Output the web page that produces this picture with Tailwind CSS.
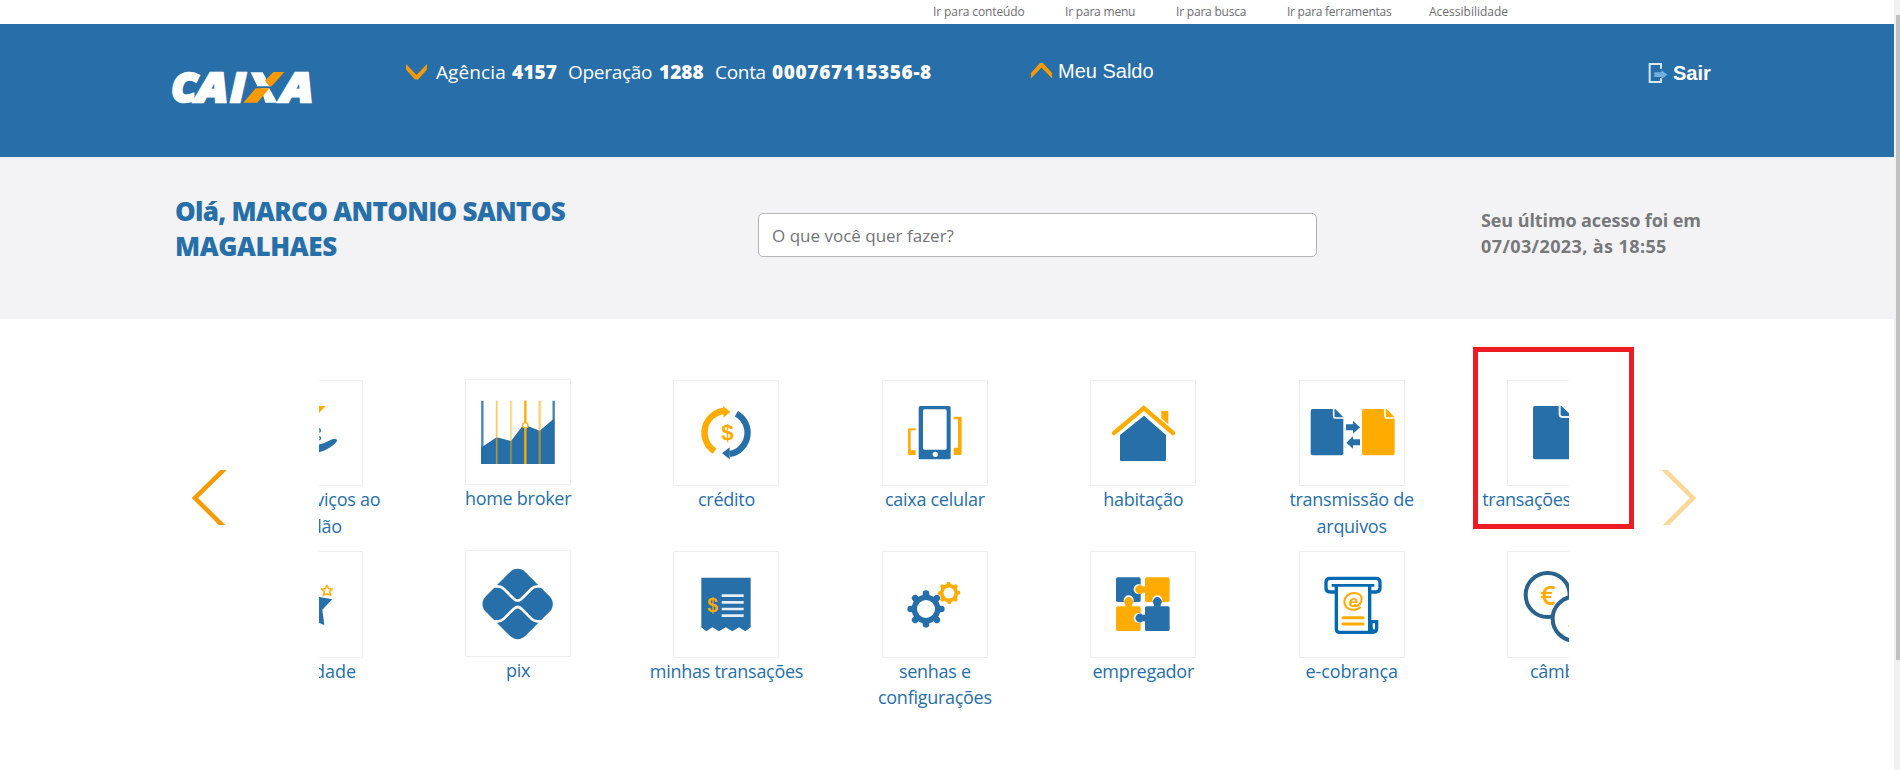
<!DOCTYPE html>
<html lang="pt-BR">
<head>
<meta charset="utf-8">
<title>CAIXA</title>
<script src="https://cdn.jsdelivr.net/npm/@tailwindcss/browser@4"></script>
</head>
<body class="w-[1900px] h-[770px] overflow-hidden bg-white font-['Open_Sans',sans-serif] flex">
<div class="w-[1894px] flex flex-col">
  <nav class="h-6 flex pl-[933px] pt-[3px] text-xs leading-[17px] text-[#6d6e71] whitespace-nowrap">
    <a class="w-[132px] tracking-[-0.1px]">Ir para conteúdo</a>
    <a class="w-[111px] tracking-[-0.2px]">Ir para menu</a>
    <a class="w-[111px] tracking-[-0.2px]">Ir para busca</a>
    <a class="w-[142px] tracking-[-0.25px]">Ir para ferramentas</a>
    <a>Acessibilidade</a>
  </nav>

  <header class="h-[133px] bg-[#286ea8] flex items-start text-white whitespace-nowrap">
    <svg class="w-[142px] h-[36px] ml-[171px] mt-[46px] overflow-visible" viewBox="63 90 426 108" aria-label="CAIXA">
      <g fill="#fff" stroke="#fff" stroke-width="7" font-family="Open Sans" font-weight="800" font-style="italic" font-size="120">
        <text x="64" y="185" textLength="78" lengthAdjust="spacingAndGlyphs">C</text>
        <text x="139" y="185" textLength="96" lengthAdjust="spacingAndGlyphs">A</text>
        <text x="241" y="185" textLength="46" lengthAdjust="spacingAndGlyphs">I</text>
        <text x="393" y="185" textLength="97" lengthAdjust="spacingAndGlyphs">A</text>
      </g>
      <path fill="#fff" d="M302 97H338L361 139H322ZM333 145H358L382 188H346Z"/>
      <path fill="#f59b00" d="M370 96H403L365 139H358L345 122ZM317 145H359L322 188H280Z"/>
    </svg>
    <div class="flex items-start ml-[93px] mt-[35px] text-[19px] leading-[26px]">
      <svg class="w-[21px] h-[16px] mt-[5px]" viewBox="0 0 21 16"><path d="M0 0L10.5 11L21 0V5.5L12 15.5H9L0 5.500Z" fill="#f59b00"/></svg>
      <span class="w-[76px] ml-[9px] tracking-[0.1px]">Agência</span>
      <b class="w-[56px] font-extrabold tracking-[0.1px]">4157</b>
      <span class="w-[91px] tracking-[-0.3px]">Operação</span>
      <b class="w-[56px] font-extrabold">1288</b>
      <span class="w-[57px] tracking-[-0.3px]">Conta</span>
      <b class="w-[160px] font-extrabold tracking-[0.65px]">000767115356-8</b>
    </div>
    <div class="flex items-start ml-[99px] mt-[34px] font-['Liberation_Sans',Arial,sans-serif] text-[20px] leading-[26px]">
      <svg class="w-[21px] h-[16px] mt-[5px]" viewBox="0 0 21 16"><path d="M0 15.500L10.500 4.500L21 15.500V10L12 0H9L0 10Z" fill="#f59b00"/></svg>
      <span class="w-[95px] ml-[6px]">Meu Saldo</span>
    </div>
    <div class="flex items-start ml-[495px] mt-[36px] font-['Liberation_Sans',Arial,sans-serif] text-[20px] leading-[26px]">
      <svg class="w-[20px] h-[22px] mt-[2px]" viewBox="0 0 60 66"><path d="M39 20V6H5V60H39V48" fill="none" stroke="#d3e8fa" stroke-width="6"/><path d="M19 31H40V24L58 38L40 52V45H19Z" fill="#74b0dc"/></svg>
      <b class="ml-[5px]">Sair</b>
    </div>
  </header>

  <section class="h-[162px] bg-[#f3f3f5] flex items-start">
    <h1 class="w-[583px] pl-[175px] box-content mt-[37px] text-[26px] leading-[35px] font-extrabold text-[#276fa8] tracking-[-0.7px]">Olá, MARCO ANTONIO SANTOS<br><span class="tracking-[-0.4px]">MAGALHAES</span></h1>
    <div class="w-[559px] h-[44px] mt-[56px] shrink-0 bg-white border border-[#b5b5b5] rounded-[5px] pl-[13px] text-[17px] leading-[44px] font-medium text-[#737478]">O que você quer fazer?</div>
    <p class="ml-[164px] mt-[50px] text-[18px] leading-[26px] font-bold text-[#77787a] whitespace-nowrap tracking-[-0.1px]">Seu último acesso foi em<br><span class="tracking-[0.4px]">07/03/2023, às 18:55</span></p>
  </section>

  <main class="relative flex-1 flex items-start pl-[192px] text-[18px] leading-[26.5px] font-normal text-[#276fa8] tracking-[-0.28px] whitespace-nowrap">
    <svg class="w-[34px] h-[55px] mt-[151px]" viewBox="0 0 34 55"><path d="M34.500 -3L3 28L32 57" fill="none" stroke="#f59b00" stroke-width="4.500"/></svg>
    <div class="w-[1250px] ml-[93px] pt-[61px] overflow-hidden">
      <div class="flex w-[1460px] -ml-[113.500px] h-[171px]">
        <div class="w-[208.400px] flex flex-col items-center text-center">
          <svg class="w-[106px] h-[106px] border border-[#efefef]" viewBox="3 3 312 312"><path d="M165 78H206L182 103Z" fill="#ffab00"/><path d="M187 145Q193 154 187 157M187 169Q194 175 187 180" stroke="#276fa8" stroke-width="4" fill="none"/><path d="M150 196Q190 198 222 179Q239 172 240 181Q240 188 222 200Q205 212 187 217L150 220Z" fill="#276fa8"/></svg>
          <span class="pl-[51px]">serviços ao</span><span>cidadão</span>
        </div>
        <div class="w-[208.400px] flex flex-col items-center text-center -mt-px">
          <svg class="w-[106px] h-[106px] border border-[#efefef]" viewBox="3 3 312 312"><path d="M52 203L95 175L138 186L172 142H190L224 155L268 118V255H48V203Z" fill="#276fa8"/><path d="M52 65V255M266 65V255" stroke="#276fa8" stroke-width="7" opacity=".85"/><path d="M95 65V255" stroke="#ffab00" stroke-width="5" opacity=".65"/><path d="M138 65V255" stroke="#ffab00" stroke-width="7" opacity=".42"/><path d="M224 65V255" stroke="#ffab00" stroke-width="7" opacity=".55"/><path d="M181 65V255" stroke="#ffab00" stroke-width="7"/><circle cx="181" cy="139" r="8" fill="#fff" stroke="#ffb21a" stroke-width="4"/></svg>
          <span>home broker</span>
        </div>
        <div class="w-[208.400px] flex flex-col items-center text-center">
          <svg class="w-[106px] h-[106px] border border-[#efefef]" viewBox="3 3 312 312"><path d="M125 213.500A65.500 65.500 0 0 1 152 93" fill="none" stroke="#ffab00" stroke-width="19"/><path d="M150 78L172 95L152 113Z" fill="#ffab00"/><path d="M190 101A65 65 0 0 1 170 222" fill="none" stroke="#276fa8" stroke-width="19"/><path d="M170 202L147 220L170 238Z" fill="#276fa8"/><text x="163" y="181" text-anchor="middle" font-family="Liberation Sans" font-weight="700" font-size="67" fill="#ffab00">$</text></svg>
          <span>crédito</span>
        </div>
        <div class="w-[208.400px] flex flex-col items-center text-center">
          <svg class="w-[106px] h-[106px] border border-[#efefef]" viewBox="3 3 312 312"><path d="M115 78H201Q206 78 206 83V233Q206 238 201 238H115Q110 238 110 233V83Q110 78 115 78ZM128 88Q123 88 123 93V204Q123 209 128 209H189Q194 209 194 204V93Q194 88 189 88Z" fill="#276fa8" fill-rule="evenodd"/><circle cx="160" cy="223" r="8" fill="#fff"/><path d="M101 145V151H86V211H101V225H82Q78 225 78 221V149Q78 145 82 145ZM215 110V118H228V203H215V225H235Q239 225 239 221V114Q239 110 235 110Z" fill="#ffab00"/></svg>
          <span>caixa celular</span>
        </div>
        <div class="w-[208.400px] flex flex-col items-center text-center">
          <svg class="w-[106px] h-[106px] border border-[#efefef]" viewBox="3 3 312 312"><path d="M214 93H235V133L214 115Z" fill="#ffab00"/><path d="M72 159L161.500 84L249 159" fill="none" stroke="#ffab00" stroke-width="13" stroke-linecap="round"/><path d="M162 107L228 165V239Q228 243 224 243H94Q90 243 90 239V165Z" fill="#276fa8"/></svg>
          <span>habitação</span>
        </div>
        <div class="w-[208.400px] flex flex-col items-center text-center">
          <svg class="w-[106px] h-[106px] border border-[#efefef]" viewBox="4 3 312 312"><path d="M42 87H110L134 112V220Q134 226 128 226H42Q36 226 36 220V93Q36 87 42 87Z" fill="#276fa8"/><path d="M105 85V107Q105 114 112 114H136" fill="none" stroke="#fff" stroke-width="5"/><path d="M196 87H264L288 112V220Q288 226 282 226H196Q190 226 190 220V93Q190 87 196 87Z" fill="#ffab00"/><path d="M259 85V107Q259 114 266 114H290" fill="none" stroke="#fff" stroke-width="5"/><path d="M142 133H163V123L184 142L163 161V151H142ZM184 178H163V169L143 188L163 206V196H184Z" fill="#276fa8"/></svg>
          <span>transmissão de</span><span>arquivos</span>
        </div>
        <div class="w-[208.400px] flex flex-col items-center text-center">
          <svg class="w-[106px] h-[106px] border border-[#efefef]" viewBox="3 3 312 312"><path d="M84 78H164L192 106V238H84Q78 238 78 232V84Q78 78 84 78Z" fill="#276fa8"/><path d="M158 76V103Q158 111 166 111H194" fill="none" stroke="#e9f1f8" stroke-width="6"/></svg>
          <span class="pr-[67px]">transações</span>
        </div>
      </div>

      <div class="flex w-[1460px] -ml-[113.500px]">
        <div class="w-[208.400px] flex flex-col items-center text-center">
          <svg class="w-[106px] h-[107px] border border-[#efefef]" viewBox="3 3 312 315"><path d="M210 103L215 113L226 114L218 122L221 133L210 128L199 133L202 122L194 114L205 113Z" fill="none" stroke="#ffb21a" stroke-width="5" stroke-linejoin="round"/><path d="M170 136L187 138L226 145L196 176L202 222L187 216L150 200Z" fill="#276fa8"/></svg>
          <span class="pl-[10px] tracking-normal">fidelidade</span>
        </div>
        <div class="w-[208.400px] flex flex-col items-center text-center -mt-px">
          <svg class="w-[106px] h-[107px] border border-[#efefef]" viewBox="3 3 312 315"><rect x="74" y="78" width="168" height="168" rx="32" fill="#276fa8" transform="rotate(45 158 162)"/><path d="M80 109H98Q109 109 117 117L147 147Q158 157 169 147L199 117Q207 109 218 109H236M80 214H98Q109 214 117 206L147 176Q158 166 169 176L199 206Q207 214 218 214H236" fill="none" stroke="#fff" stroke-width="8"/></svg>
          <span>pix</span>
        </div>
        <div class="w-[208.400px] flex flex-col items-center text-center">
          <svg class="w-[106px] h-[107px] border border-[#efefef]" viewBox="3 3 312 315"><path d="M85 80H233V229L217 241L198 229L178 241L158 229L138 241L118 229L100 241L85 229Z" fill="#276fa8"/><path d="M146 134H212M146 154H212M146 174H212M146 194H212" stroke="#e6eff6" stroke-width="8"/><text x="119" y="184" text-anchor="middle" font-family="Liberation Sans" font-weight="700" font-size="58" fill="#ffab00">$</text></svg>
          <span>minhas transações</span>
        </div>
        <div class="w-[208.400px] flex flex-col items-center text-center">
          <svg class="w-[106px] h-[107px] border border-[#efefef]" viewBox="3 3 312 315"><circle cx="132" cy="174" r="35" fill="none" stroke="#276fa8" stroke-width="16"/><g stroke="#276fa8" stroke-width="20" stroke-linecap="round"><path d="M132 128V133M132 215V220M86 174H91M173 174H178M99.500 141.500L103 145M161 203L164.500 206.500M164.500 141.500L161 145M103 203L99.500 206.500"/></g><circle cx="201" cy="126" r="22" fill="none" stroke="#ffab00" stroke-width="11"/><g stroke="#ffab00" stroke-width="12" stroke-linecap="round"><path d="M200 98V100M202 152V154M173 127H175M227 125H229M181 106L183 108M219 144L221 146M221 106L219 108M183 144L181 146"/></g></svg>
          <span>senhas e</span><span class="-mt-px">configurações</span>
        </div>
        <div class="w-[208.400px] flex flex-col items-center text-center">
          <svg class="w-[106px] h-[107px] border border-[#efefef]" viewBox="3 3 312 315"><g fill="#276fa8"><rect x="78" y="79" width="74" height="74" rx="5"/><rect x="165" y="166" width="74" height="74" rx="5"/></g><g fill="#ffab00"><rect x="165" y="79" width="74" height="74" rx="5"/><rect x="78" y="166" width="74" height="74" rx="5"/></g><g fill="#fff"><circle cx="146" cy="115" r="15"/><circle cx="116" cy="148" r="15"/><circle cx="202" cy="148" r="15"/><circle cx="146" cy="201" r="15"/></g><g fill="#ffab00"><path d="M166 106H158A13 13 0 1 0 158 125H166ZM106 167V160A13 13 0 1 1 126 160V167Z"/></g><g fill="#276fa8"><path d="M192 167V160A13 13 0 1 1 212 160V167ZM166 191H158A13 13 0 1 0 158 211H166Z"/></g></svg>
          <span>empregador</span>
        </div>
        <div class="w-[208.400px] flex flex-col items-center text-center">
          <svg class="w-[106px] h-[107px] border border-[#efefef]" viewBox="4 3 312 315"><g fill="none" stroke="#0069b0" stroke-width="10"><path d="M111 123H94Q82 123 82 111V94Q82 82 94 82H232Q244 82 244 94V111Q244 123 232 123H215"/><path d="M99 103H227" stroke-width="8"/><path d="M113 103V234Q113 244 123 244H222Q234 244 234 232V212H217V227Q217 240 228 242M213 103V240"/></g><path d="M133 200H193M133 219H193" stroke="#ffab00" stroke-width="9" stroke-linecap="round"/><path d="M186 168Q176 178 160 176Q137 172 137 152Q140 128 165 126Q190 126 189 147Q186 164 168 166" fill="none" stroke="#ffab00" stroke-width="6"/><text x="164" y="167" text-anchor="middle" font-family="Liberation Sans" font-weight="700" font-style="italic" font-size="50" fill="#ffab00">e</text></svg>
          <span class="tracking-[-0.1px]">e-cobrança</span>
        </div>
        <div class="w-[208.400px] flex flex-col items-center text-center">
          <svg class="w-[106px] h-[107px] border border-[#efefef]" viewBox="3 3 312 315"><circle cx="122" cy="132" r="66" fill="#fff" stroke="#2a628c" stroke-width="12"/><text x="100" y="161" font-family="Open Sans" font-weight="600" font-size="82" fill="#ffab00" textLength="46" lengthAdjust="spacingAndGlyphs">€</text><circle cx="203" cy="203" r="66" fill="#fff" stroke="#2a628c" stroke-width="12"/><rect x="183" y="222" width="10" height="6" fill="#ffe0a3"/></svg>
          <span>câmbio</span>
        </div>
      </div>
    </div>
    <svg class="w-[34px] h-[55px] ml-[93px] mt-[151px]" viewBox="0 0 34 55"><path d="M-0.500 -3L31 28L2 57" fill="none" stroke="#fbd798" stroke-width="4.500"/></svg>
    <div class="absolute left-[1473px] top-[28px] w-[161px] h-[182px] border-5 border-[#ed1c24]"></div>
  </main>
</div>
<aside class="w-[6px] bg-[#f1f1f1] pt-[15px] pl-[2px]"><div class="h-[645px] bg-[#c1c1c1]"></div></aside>
</body>
</html>
